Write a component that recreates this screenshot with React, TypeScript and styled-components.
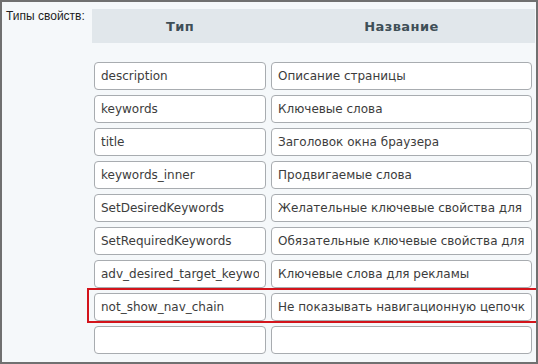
import React from "react"
import styled, { createGlobalStyle } from "styled-components"

const GlobalStyle = createGlobalStyle`
  html, body {
    margin: 0;
    padding: 0;
    background: #f5f8fa;
  }
  * {
    box-sizing: border-box;
  }
`

interface PropertyRow {
  code: string
  name: string
  marked?: boolean
}

const rows: PropertyRow[] = [
  { code: "description", name: "Описание страницы" },
  { code: "keywords", name: "Ключевые слова" },
  { code: "title", name: "Заголовок окна браузера" },
  { code: "keywords_inner", name: "Продвигаемые слова" },
  { code: "SetDesiredKeywords", name: "Желательные ключевые свойства для раздела" },
  { code: "SetRequiredKeywords", name: "Обязательные ключевые свойства для раздела" },
  { code: "adv_desired_target_keywords", name: "Ключевые слова для рекламы" },
  { code: "not_show_nav_chain", name: "Не показывать навигационную цепочку", marked: true },
  { code: "", name: "" },
]

const App: React.FC = () => (
  <>
    <GlobalStyle />
    <Frame>
      <Label>Типы свойств:</Label>
      <Table>
        <Header>
          <HeadCell>Тип</HeadCell>
          <HeadCell>Название</HeadCell>
        </Header>
        <Body>
          {rows.map((row, i) => (
            <Row key={i} $marked={row.marked}>
              <Field type="text" defaultValue={row.code} />
              <Field type="text" defaultValue={row.name} />
            </Row>
          ))}
        </Body>
      </Table>
    </Frame>
  </>
)

const Frame = styled.div`
  width: 538px;
  height: 364px;
  border: 2px solid #707070;
  background: #f5f8fa;
  display: grid;
  grid-template-columns: 90px 1fr;
  align-items: start;
  padding-top: 7px;
  overflow: hidden;
`

const Label = styled.div`
  padding-left: 4px;
  padding-top: 1px;
  font-family: "Liberation Sans", Arial, sans-serif;
  font-size: 12px;
  line-height: 13px;
  color: #1e1e1e;
`

const Table = styled.div`
  display: flex;
  flex-direction: column;
  padding-right: 1px;
`

const Header = styled.div`
  height: 34px;
  background: #e1e7eb;
  display: grid;
  grid-template-columns: 172px 261px;
  column-gap: 5px;
  padding-left: 2px;
  align-items: center;
`

const HeadCell = styled.div`
  text-align: center;
  font-family: "DejaVu Sans", Verdana, sans-serif;
  font-weight: bold;
  font-size: 13px;
  letter-spacing: 0.4px;
  color: #3f4f57;
`

const Body = styled.div`
  margin-top: 19px;
  padding-left: 2px;
  display: flex;
  flex-direction: column;
  gap: 5px;
`

const Row = styled.div<{ $marked?: boolean }>`
  position: relative;
  display: grid;
  grid-template-columns: 172px 261px;
  column-gap: 5px;

  ${({ $marked }) =>
    $marked &&
    `
    &::after {
      content: "";
      position: absolute;
      top: -5px;
      left: -7px;
      right: -3px;
      bottom: -2px;
      border: 2px solid #d3141b;
      pointer-events: none;
    }
  `}
`

const Field = styled.input`
  height: 28px;
  width: 100%;
  margin: 0;
  padding: 0 6px;
  border: 1px solid #a8acb0;
  border-radius: 4px;
  background: #ffffff;
  font-family: "DejaVu Sans", Verdana, sans-serif;
  font-size: 12px;
  color: #3c3c3c;
  outline: none;
`

export default App
